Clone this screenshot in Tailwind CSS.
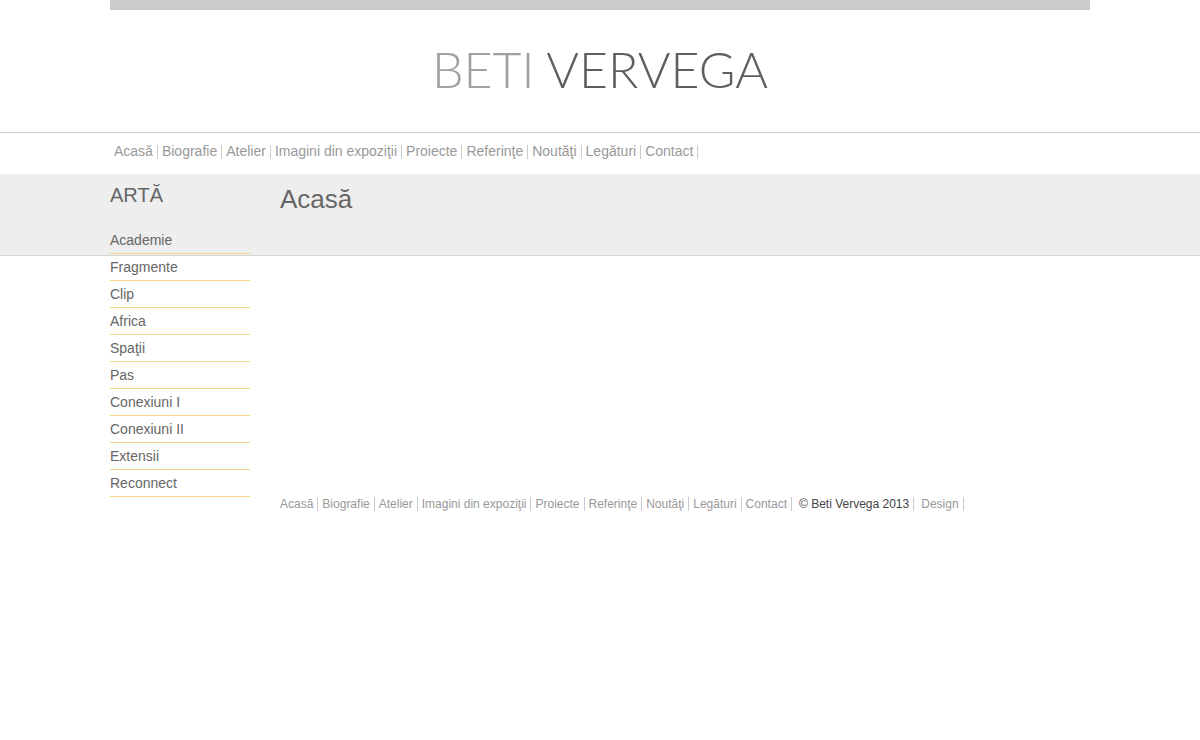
<!DOCTYPE html>
<html lang="ro">

<head>
  <meta charset="UTF-8">
  <meta name="viewport" content="width=device-width, initial-scale=1.0">
  <title>Beti Vervega - Acasă</title>
  <script src="https://cdn.jsdelivr.net/npm/@tailwindcss/browser@4"></script>
</head>

<body class="bg-white font-['Liberation_Sans',Arial,sans-serif] text-sm text-[#666]">
  <header class="border-b border-[#ccc]">
    <div class="mx-auto max-w-[980px] border-t-10 border-[#cbcbcb] pt-[23px] pb-[27px] text-center">
      <a href="#" class="inline-block font-['Lato',sans-serif] text-[50px] leading-[72px] font-light text-[#5e5e5e]"><span class="text-[#a0a0a2]">BETI</span> VERVEGA</a>
    </div>
  </header>

  <!-- Meniu principal -->
  <nav class="mx-auto max-w-[980px] pt-3 pb-[15px]">
    <ul class="flex flex-wrap text-[#999] leading-3">
      <li class="border-r border-[#ccc] px-1 pb-0.5"><a href="#">Acasă</a></li>
      <li class="border-r border-[#ccc] px-1 pb-0.5"><a href="#">Biografie</a></li>
      <li class="border-r border-[#ccc] px-1 pb-0.5"><a href="#">Atelier</a></li>
      <li class="border-r border-[#ccc] px-1 pb-0.5"><a href="#">Imagini din expoziţii</a></li>
      <li class="border-r border-[#ccc] px-1 pb-0.5"><a href="#">Proiecte</a></li>
      <li class="border-r border-[#ccc] px-1 pb-0.5"><a href="#">Referinţe</a></li>
      <li class="border-r border-[#ccc] px-1 pb-0.5"><a href="#">Noutăţi</a></li>
      <li class="border-r border-[#ccc] px-1 pb-0.5"><a href="#">Legături</a></li>
      <li class="border-r border-[#ccc] px-1 pb-0.5"><a href="#">Contact</a></li>
    </ul>
  </nav>

  <div class="relative">
    <!-- banda gri din spatele titlurilor -->
    <div class="absolute inset-x-0 top-0 -z-10 h-[82px] border-b border-[#d5d5d5] bg-[#eee]"></div>

    <div class="mx-auto flex max-w-[980px] gap-[30px]">
      <aside class="w-[140px] shrink-0">
        <h2 class="pt-[9px] pb-5 text-xl leading-6">ARTĂ</h2>
        <ul class="leading-[26px]">
          <li class="border-b border-[#f8d48a]"><a href="#" class="block">Academie</a></li>
          <li class="border-b border-[#f8d48a]"><a href="#" class="block">Fragmente</a></li>
          <li class="border-b border-[#f8d48a]"><a href="#" class="block">Clip</a></li>
          <li class="border-b border-[#f8d48a]"><a href="#" class="block">Africa</a></li>
          <li class="border-b border-[#f8d48a]"><a href="#" class="block">Spaţii</a></li>
          <li class="border-b border-[#f8d48a]"><a href="#" class="block">Pas</a></li>
          <li class="border-b border-[#f8d48a]"><a href="#" class="block">Conexiuni I</a></li>
          <li class="border-b border-[#f8d48a]"><a href="#" class="block">Conexiuni II</a></li>
          <li class="border-b border-[#f8d48a]"><a href="#" class="block">Extensii</a></li>
          <li class="border-b border-[#f8d48a]"><a href="#" class="block">Reconnect</a></li>
        </ul>
      </aside>
      <main class="grow">
        <h1 class="pt-[10px] text-[26px] leading-[30px]">Acasă</h1>
      </main>
    </div>
  </div>

  <footer class="mx-auto max-w-[980px] pl-[170px]">
    <ul class="flex flex-wrap text-xs leading-[14px] text-[#999]">
      <li class="border-r border-[#ccc] pr-1"><a href="#">Acasă</a></li>
      <li class="border-r border-[#ccc] px-1"><a href="#">Biografie</a></li>
      <li class="border-r border-[#ccc] px-1"><a href="#">Atelier</a></li>
      <li class="border-r border-[#ccc] px-1"><a href="#">Imagini din expoziţii</a></li>
      <li class="border-r border-[#ccc] px-1"><a href="#">Proiecte</a></li>
      <li class="border-r border-[#ccc] px-1"><a href="#">Referinţe</a></li>
      <li class="border-r border-[#ccc] px-1"><a href="#">Noutăţi</a></li>
      <li class="border-r border-[#ccc] px-1"><a href="#">Legături</a></li>
      <li class="border-r border-[#ccc] px-1"><a href="#">Contact</a></li>
      <li class="border-r border-[#ccc] pr-1 pl-[7px] text-[#444]">© Beti Vervega 2013</li>
      <li class="border-r border-[#ccc] pr-1 pl-[7px]"><a href="#">Design</a></li>
    </ul>
  </footer>
</body>

</html>
